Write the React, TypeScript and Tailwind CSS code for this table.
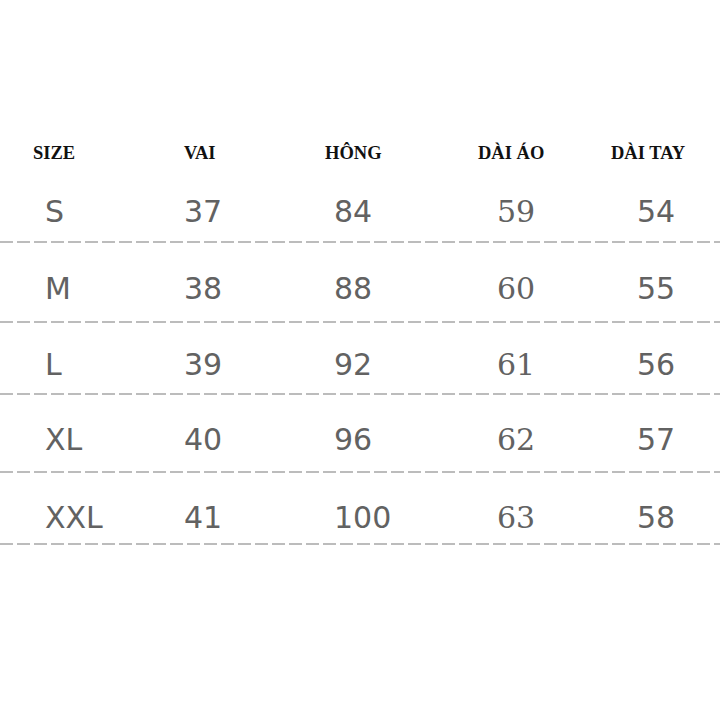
const headers = [
  { label: 'SIZE', w: 'w-[184px] pl-[33px]' },
  { label: 'VAI', w: 'w-[141px]' },
  { label: 'HÔNG', w: 'w-[153px]' },
  { label: 'DÀI ÁO', w: 'w-[133px]' },
  { label: 'DÀI TAY', w: 'flex-1' },
];

const rows = [
  { cells: ['S', '37', '84', '59', '54'], h: 'h-[88px] pb-[14px]' },
  { cells: ['M', '38', '88', '60', '55'], h: 'h-[78px] pb-[17px]' },
  { cells: ['L', '39', '92', '61', '56'], h: 'h-[70px] pb-[13px]' },
  { cells: ['XL', '40', '96', '62', '57'], h: 'h-[76px] pb-[16px]' },
  { cells: ['XXL', '41', '100', '63', '58'], h: 'h-[70px] pb-[10px]' },
];

// left edges of the value columns: 45, 184, 334, 497, 637
const cols = [
  'w-[184px] pl-[45px] font-["DejaVu_Sans",sans-serif]',
  'w-[150px] font-["DejaVu_Sans",sans-serif]',
  'w-[163px] font-["DejaVu_Sans",sans-serif]',
  'w-[140px] font-["DejaVu_Serif",serif]',
  'flex-1 font-["DejaVu_Sans",sans-serif]',
];

function Dashes() {
  return (
    <div className="h-[2px] w-full bg-[repeating-linear-gradient(90deg,#bcbcbc_0_13px,transparent_13px_17px)]" />
  );
}

export default function App() {
  return (
    <div className="w-[720px] h-[720px] bg-white overflow-hidden">
      {/* Header */}
      <div className="flex pt-[141px] text-[18.5px] font-bold leading-[24px] text-[#111] font-['Liberation_Serif',serif]">
        {headers.map((h) => (
          <div key={h.label} className={`${h.w} whitespace-nowrap`}>
            {h.label}
          </div>
        ))}
      </div>

      {/* Rows */}
      <div className="-mt-[12px]">
        {rows.map((r, i) => (
          <div key={i}>
            <div className={`flex items-end ${r.h} text-[30px] leading-none text-[#626262]`}>
              {r.cells.map((c, j) => (
                <div key={j} className={cols[j]}>
                  {c}
                </div>
              ))}
            </div>
            <Dashes />
          </div>
        ))}
      </div>
    </div>
  );
}
